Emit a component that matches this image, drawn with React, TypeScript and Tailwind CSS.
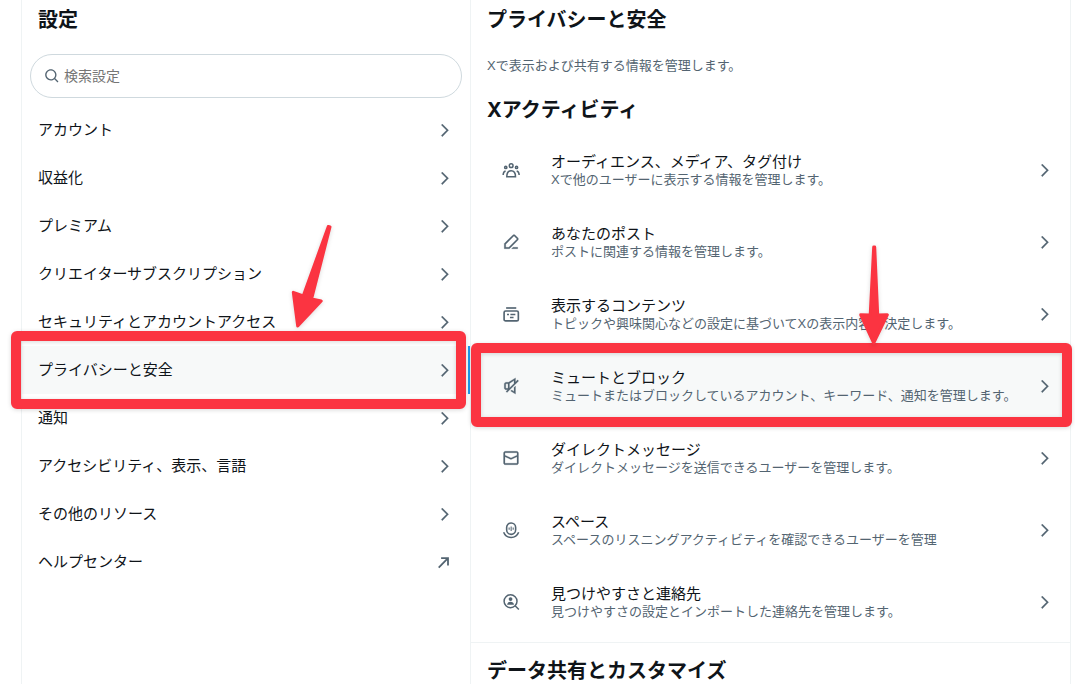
import React from "react";

type IconProps = { className?: string };

function ChevronIcon() {
  return (
    <svg viewBox="0 0 24 24" aria-hidden="true" className="size-[18px] shrink-0 fill-[#536471]">
      <path d="M14 12.4L7 5.4l1.414-1.42L16.83 12.4l-8.416 8.46L7 19.44 14 12.4z" stroke="#536471" strokeWidth="0.3" />
    </svg>
  );
}

function ExternalIcon() {
  return (
    <svg viewBox="0 0 24 24" aria-hidden="true" className="size-[18px] shrink-0 fill-none stroke-[#536471] stroke-[2.4]">
      <path d="M6.8 6.8h9.2v9.7M16 6.8L3.6 19.4" />
    </svg>
  );
}

function SearchIcon() {
  return (
    <svg viewBox="0 0 24 24" aria-hidden="true" className="size-4 shrink-0 fill-[#536471]">
      <path d="M10.25 3.75c-3.59 0-6.5 2.91-6.5 6.5s2.91 6.5 6.5 6.5c1.795 0 3.419-.726 4.596-1.904 1.178-1.177 1.904-2.801 1.904-4.596 0-3.59-2.91-6.5-6.5-6.5zm-8.5 6.5c0-4.694 3.806-8.5 8.5-8.5s8.5 3.806 8.5 8.5c0 1.986-.682 3.815-1.824 5.262l4.781 4.781-1.414 1.414-4.781-4.781c-1.447 1.142-3.276 1.824-5.262 1.824-4.694 0-8.5-3.806-8.5-8.5z" />
    </svg>
  );
}

function PeopleIcon({ className }: IconProps) {
  return (
    <svg viewBox="0 0 24 24" aria-hidden="true" className={className} fill="none" stroke="currentColor" strokeWidth="2">
      <circle cx="12.2" cy="6.2" r="2.5" />
      <circle cx="5" cy="8.6" r="1.5" />
      <circle cx="19.4" cy="8.6" r="1.5" />
      <path d="M6.4 21h11.600c0-5.200-2-8-5.800-8s-5.800 2.800-5.800 8z" />
      <path d="M1.500 18.800c.1-3 1-5 3.300-5.600M22.900 18.800c-.1-3-1-5-3.300-5.600" />
    </svg>
  );
}

function PenIcon({ className }: IconProps) {
  return (
    <svg viewBox="0 0 24 24" aria-hidden="true" className={className} fill="currentColor" stroke="currentColor" strokeWidth="0.3">
      <path d="M14.23 2.854c.98-.977 2.56-.977 3.54 0l3.38 3.378c.97.977.97 2.559 0 3.536L9.91 21H3v-6.914L14.23 2.854zm2.12 1.414c-.19-.195-.51-.195-.7 0L5 14.914V19h4.09L19.73 8.354c.2-.196.2-.512 0-.708l-3.38-3.378zM14.75 19l-2 2H21v-2h-6.25z" />
    </svg>
  );
}

function CardsIcon({ className }: IconProps) {
  return (
    <svg viewBox="0 0 24 24" aria-hidden="true" className={className} fill="none" stroke="currentColor" strokeWidth="2.2">
      <path d="M5.500 4h13.500" />
      <rect x="2.800" y="8" width="19" height="13.200" rx="2" />
      <path d="M6.700 12.600h2.600M11.200 12.600h6.600M10.600 16.600h4.800" strokeWidth="1.900" />
    </svg>
  );
}

function MuteIcon({ className }: IconProps) {
  return (
    <svg viewBox="0 0 24 24" aria-hidden="true" className={className} fill="currentColor" stroke="currentColor" strokeWidth="0.3">
      <path d="M18 6.59V1.2L8.71 7H5.5C4.12 7 3 8.12 3 9.5v5C3 15.88 4.12 17 5.5 17h2.09l-2.3 2.29 1.42 1.42 15.5-15.5-1.42-1.42L18 6.59zm-8 8V8.55l6-3.75v3.79l-6 6zM5 9.5c0-.28.22-.5.5-.5H8v6H5.5c-.28 0-.5-.22-.5-.5v-5zm6.5 9.24l1.45-1.45L16 19.2V14l2-2v10.8l-6.5-4.06z" />
    </svg>
  );
}

function MailIcon({ className }: IconProps) {
  return (
    <svg viewBox="0 0 24 24" aria-hidden="true" className={className} fill="currentColor" stroke="currentColor" strokeWidth="0.3">
      <path d="M1.998 5.5c0-1.381 1.119-2.5 2.5-2.5h15c1.381 0 2.5 1.119 2.5 2.5v13c0 1.381-1.119 2.5-2.5 2.5h-15c-1.381 0-2.5-1.119-2.5-2.5v-13zm2.5-.5c-.276 0-.5.224-.5.5v2.764l8 3.638 8-3.636V5.5c0-.276-.224-.5-.5-.5h-15zm15.5 5.463l-8 3.636-8-3.638V18.5c0 .276.224.5.5.5h15c.276 0 .5-.224.5-.5v-8.037z" />
    </svg>
  );
}

function SpaceIcon({ className }: IconProps) {
  return (
    <svg viewBox="0 0 24 24" aria-hidden="true" className={className} fill="none" stroke="currentColor" strokeWidth="2.1">
      <rect x="6.200" y="2.600" width="12" height="15.200" rx="6" />
      <path d="M9.500 8.800v3M12.200 7.400v5.800M14.900 8.800v3" strokeWidth="1.400" />
      <path d="M2.200 15c1.700 4.300 5.400 6.900 10 6.900s8.300-2.600 10-6.900" />
    </svg>
  );
}

function FindPersonIcon({ className }: IconProps) {
  return (
    <svg viewBox="0 0 24 24" aria-hidden="true" className={className} fill="none" stroke="currentColor" strokeWidth="2">
      <circle cx="11.400" cy="11" r="8.600" />
      <path d="M17.500 17.100l5 5" />
      <circle cx="11.400" cy="8" r="2.500" fill="currentColor" stroke="none" />
      <path d="M6.800 15.500c.5-2.700 2.200-3.900 4.600-3.900s4.100 1.200 4.600 3.900z" fill="currentColor" stroke="none" />
    </svg>
  );
}

const menu = [
  { label: "アカウント" },
  { label: "収益化" },
  { label: "プレミアム" },
  { label: "クリエイターサブスクリプション" },
  { label: "セキュリティとアカウントアクセス" },
  { label: "プライバシーと安全", active: true },
  { label: "通知" },
  { label: "アクセシビリティ、表示、言語" },
  { label: "その他のリソース" },
  { label: "ヘルプセンター", external: true },
];

const activities = [
  { icon: PeopleIcon, title: "オーディエンス、メディア、タグ付け", text: "Xで他のユーザーに表示する情報を管理します。" },
  { icon: PenIcon, title: "あなたのポスト", text: "ポストに関連する情報を管理します。" },
  { icon: CardsIcon, title: "表示するコンテンツ", text: "トピックや興味関心などの設定に基づいてXの表示内容を決定します。" },
  { icon: MuteIcon, title: "ミュートとブロック", text: "ミュートまたはブロックしているアカウント、キーワード、通知を管理します。", active: true },
  { icon: MailIcon, title: "ダイレクトメッセージ", text: "ダイレクトメッセージを送信できるユーザーを管理します。" },
  { icon: SpaceIcon, title: "スペース", text: "スペースのリスニングアクティビティを確認できるユーザーを管理" },
  { icon: FindPersonIcon, title: "見つけやすさと連絡先", text: "見つけやすさの設定とインポートした連絡先を管理します。" },
];

function MenuCallout() {
  return (
    <div aria-hidden="true" className="pointer-events-none">
      <div className="absolute -top-[15px] right-1 -bottom-[15px] -left-[11px] z-10 rounded-md border-10 border-[#fb3441] drop-shadow-sm" />
      <svg
        viewBox="0 0 48 112"
        className="absolute -top-[126px] left-[266px] z-10 h-28 w-12 fill-[#fb3441] stroke-[#fb3441] stroke-3 drop-shadow-sm"
        strokeLinejoin="round"
      >
        <path d="M40.300 6.500L15.200 76 5.300 72.300 9.700 106 33.200 81 23.600 79 42 7z" />
      </svg>
    </div>
  );
}

function ActivityCallout() {
  return (
    <div aria-hidden="true" className="pointer-events-none">
      <div className="absolute -top-[7px] -right-0.5 -bottom-[5px] left-0 z-10 rounded-md border-10 border-[#fb3441] drop-shadow-sm" />
      <svg
        viewBox="0 0 40 110"
        className="absolute -top-[110px] left-[383px] z-10 h-[110px] w-10 fill-[#fb3441] stroke-[#fb3441] stroke-3 drop-shadow-sm"
        strokeLinejoin="round"
      >
        <path d="M19.700 7L16.200 75 6.700 74.800 19.700 103 33.300 74.800 23.700 75 20.700 7z" />
      </svg>
    </div>
  );
}

export default function App() {
  return (
    <div
      lang="ja"
      className="mr-1 ml-[21px] grid min-h-screen grid-cols-[3fr_4fr] bg-white font-['Liberation_Sans','Noto_Sans_CJK_JP',sans-serif] text-[#0f1419]"
    >
      <nav aria-label="設定" className="border-x border-[#eff3f4]">
        <h2 className="px-4 pt-2 text-xl leading-6 font-bold">設定</h2>
        <label className="mx-2 mt-[22px] mb-2 flex h-11 items-center gap-1 rounded-full border border-[#cfd9de] px-[13px]">
          <SearchIcon />
          <input
            type="search"
            aria-label="検索設定"
            placeholder="検索設定"
            className="min-w-0 flex-1 bg-transparent text-sm outline-none placeholder:text-[#757575]"
          />
        </label>
        <ul>
          {menu.map((item) => (
            <li key={item.label} className="relative">
              <a
                href="#"
                aria-current={item.active ? "page" : undefined}
                className={
                  item.active
                    ? "flex h-12 items-center justify-between border-r-2 border-[#1d9bf0] bg-[#f7f9f9] pr-3.5 pl-4 text-[15px] leading-5"
                    : "flex h-12 items-center justify-between px-4 text-[15px] leading-5"
                }
              >
                {item.label}
                {item.external ? <ExternalIcon /> : <ChevronIcon />}
              </a>
              {item.active && <MenuCallout />}
            </li>
          ))}
        </ul>
      </nav>

      <main className="border-r border-[#eff3f4]">
        <h2 className="px-4 pt-2 text-xl leading-6 font-bold">プライバシーと安全</h2>
        <p className="px-4 pt-[26px] text-[13px] leading-4 text-[#536471]">Xで表示および共有する情報を管理します。</p>
        <section className="border-b border-[#eff3f4] pb-1">
          <h3 className="px-4 pt-6 pb-3 font-['Inter','Noto_Sans_CJK_JP',sans-serif] text-xl leading-6 font-bold">Xアクティビティ</h3>
          <ul>
            {activities.map(({ icon: Icon, title, text, active }) => (
              <li key={title} className="relative">
                <a
                  href="#"
                  className={
                    active
                      ? "flex h-[72px] items-center gap-4 bg-[#f7f9f9] px-4"
                      : "flex h-[72px] items-center gap-4 px-4"
                  }
                >
                  <span className="flex w-12 shrink-0 justify-center text-[#536471]">
                    <Icon className="size-[18px]" />
                  </span>
                  <span className="min-w-0 flex-1">
                    <span className="block text-[15px] leading-5">{title}</span>
                    <span className="block text-[13px] leading-4 text-[#536471]">{text}</span>
                  </span>
                  <ChevronIcon />
                </a>
                {active && <ActivityCallout />}
              </li>
            ))}
          </ul>
        </section>
        <h3 className="px-4 pt-4 text-xl leading-6 font-bold">データ共有とカスタマイズ</h3>
      </main>
    </div>
  );
}
